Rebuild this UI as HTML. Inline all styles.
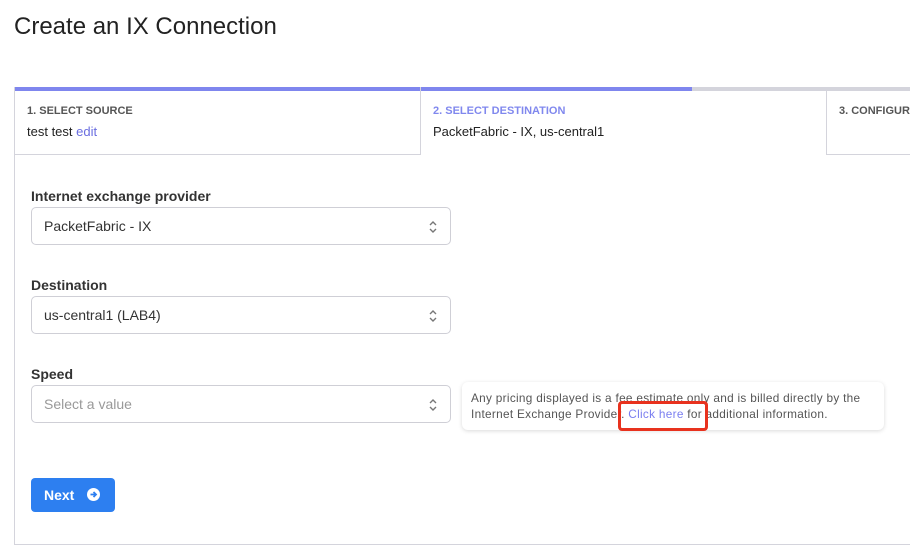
<!DOCTYPE html>
<html><head><style>
*{box-sizing:border-box;margin:0;padding:0}
body{width:910px;height:549px;overflow:hidden;background:#fff;font-family:"Liberation Sans",sans-serif;color:#222;position:relative}
.abs{position:absolute}
h1{position:absolute;left:14px;top:13px;font-size:24px;font-weight:400;color:#222}
.tab{position:absolute;top:87px;height:68px;border:1px solid #d4d4dc;border-top:none;background:#fff}
.bar{position:absolute;top:0;left:0;right:0;height:4px}
.tl{position:absolute;left:12px;top:18px;font-size:11px;font-weight:bold;color:#555;letter-spacing:0}
.tv{position:absolute;left:12px;top:37px;font-size:13px;color:#222}
label{position:absolute;left:31px;font-size:14px;font-weight:bold;color:#333}
.sel{position:absolute;left:31px;width:420px;height:38px;border:1px solid #cfcfd6;border-radius:5px;font-size:14px;padding:10px 12px;color:#333}
.sel svg{position:absolute;right:12px;top:12px}
</style></head><body>
<h1>Create an IX Connection</h1>
<div class="abs" style="left:14px;top:154px;width:900px;height:391px;border-left:1px solid #d4d4dc;border-bottom:1px solid #d4d4dc"></div>
<div class="tab" style="left:14px;width:407px"><div class="bar" style="background:#7f86ee"></div><div class="tl">1. SELECT SOURCE</div><div class="tv">test test <span style="color:#6a6ee0">edit</span></div></div>
<div class="tab" style="left:420px;width:407px;border-bottom:none;height:68px"><div class="bar" style="background:#d4d4dc"></div><div class="bar" style="width:271px;background:#7f86ee"></div><div class="tl" style="color:#8088ee">2. SELECT DESTINATION</div><div class="tv">PacketFabric - IX, us-central1</div></div>
<div class="tab" style="left:826px;width:100px"><div class="bar" style="background:#d4d4dc"></div><div class="tl">3. CONFIGURE</div></div>
<label style="top:188px">Internet exchange provider</label>
<div class="sel" style="top:207px">PacketFabric - IX<svg width="10" height="14" viewBox="0 0 10 14"><path d="M2 5l3-3 3 3M2 9l3 3 3-3" fill="none" stroke="#777" stroke-width="1.4"/></svg></div>
<label style="top:277px">Destination</label>
<div class="sel" style="top:296px">us-central1 (LAB4)<svg width="10" height="14" viewBox="0 0 10 14"><path d="M2 5l3-3 3 3M2 9l3 3 3-3" fill="none" stroke="#777" stroke-width="1.4"/></svg></div>
<label style="top:366px">Speed</label>
<div class="sel" style="top:385px;color:#999">Select a value<svg width="10" height="14" viewBox="0 0 10 14"><path d="M2 5l3-3 3 3M2 9l3 3 3-3" fill="none" stroke="#777" stroke-width="1.4"/></svg></div>
<div class="abs" style="left:462px;top:382px;width:422px;height:48px;background:#fff;border-radius:6px;box-shadow:0 1px 4px rgba(0,0,0,.15);font-size:11.8px;line-height:16px;color:#555;padding:8px 9px;letter-spacing:0.3px"><div style="width:402px">Any pricing displayed is a fee estimate only and is billed directly by the Internet Exchange Provider. <span style="color:#7a7ef0">Click here</span> for additional information.</div></div>
<div class="abs" style="left:618px;top:401px;width:90px;height:30px;border:3px solid #e8321e;border-radius:4px"></div>
<div class="abs" style="left:31px;top:478px;width:84px;height:34px;background:#2d7ff0;border-radius:4px;color:#fff;font-weight:bold;font-size:14px;padding:9px 0 0 13px">Next<svg style="position:absolute;left:56px;top:10px" width="13" height="13" viewBox="0 0 13 13"><circle cx="6.5" cy="6.5" r="6.5" fill="#fff"/><path d="M3.5 6.5h5M6.5 4l2.5 2.5-2.5 2.5" fill="none" stroke="#2d7ff0" stroke-width="1.8"/></svg></div>
</body></html>
